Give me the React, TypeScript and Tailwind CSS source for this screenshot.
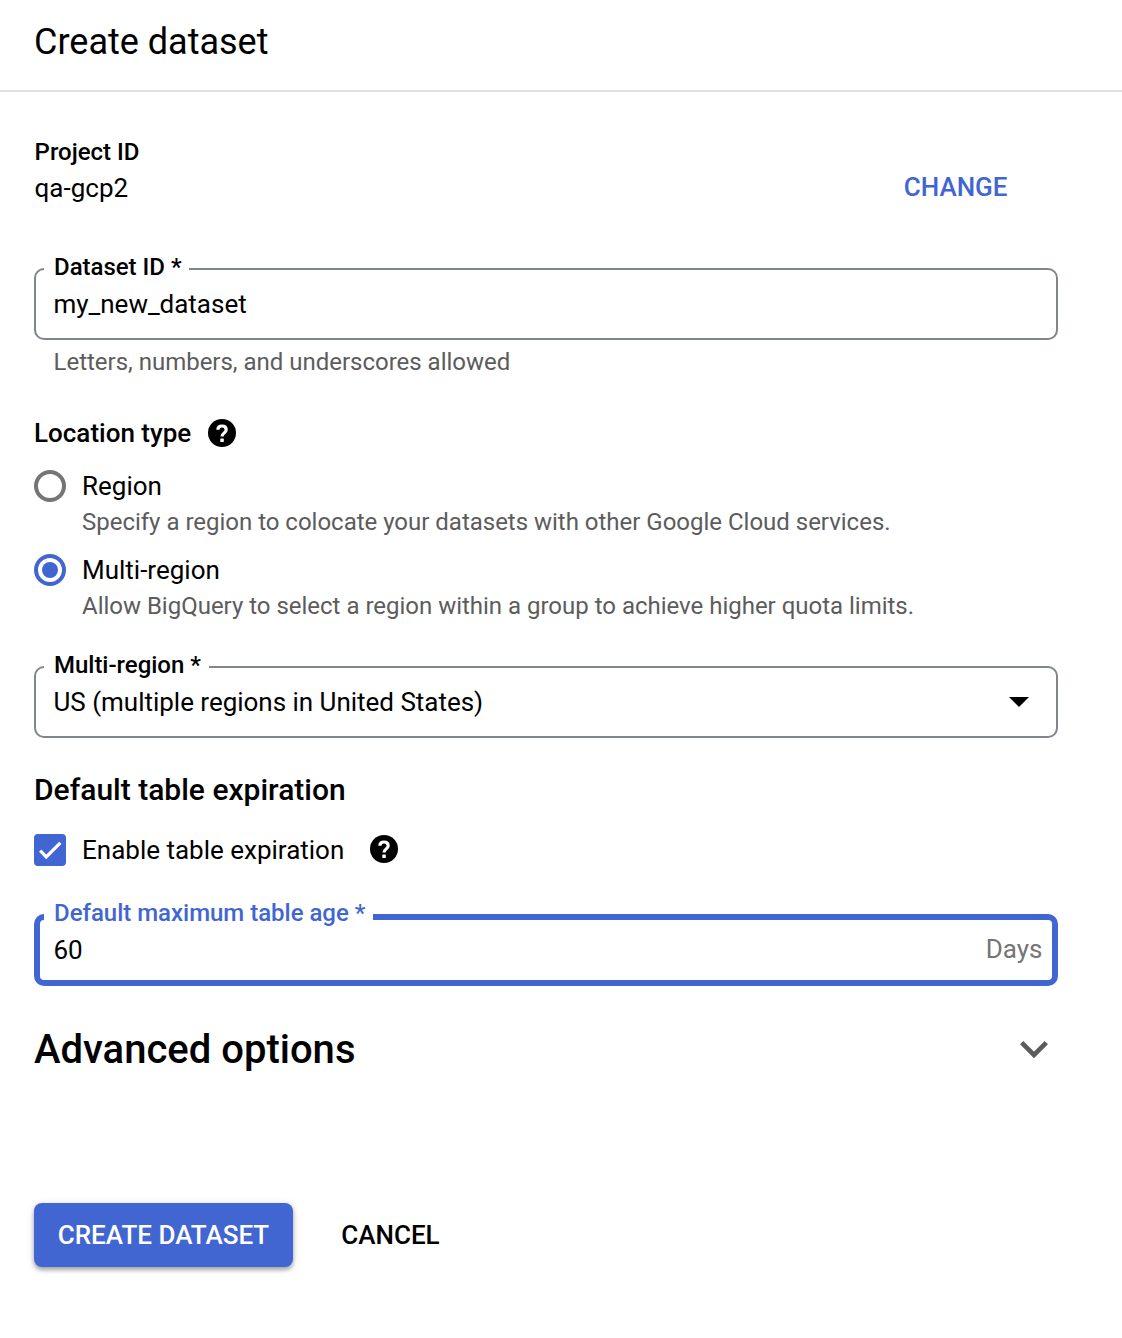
import React from 'react';

function HelpIcon() {
  return (
    <svg className="block size-[28px] shrink-0" viewBox="0 0 28 28">
      <circle cx="14" cy="14" r="14" fill="#000" />
      <path d="M9.900 10.700C9.900 8.200 11.500 7 14 7s4.200 1.400 4.200 3.700c0 3.200-4.100 3.200-4.100 6.700" fill="none" stroke="#fff" strokeWidth="3.200" />
      <rect x="12.300" y="19.500" width="3.500" height="3.500" rx="0.5" fill="#fff" />
    </svg>
  );
}

type FieldProps = { label: string; value: string; focused?: boolean; children?: React.ReactNode };

function Field({ label, value, focused = false, children }: FieldProps) {
  return (
    <fieldset className={focused
      ? 'm-0 h-[83px] w-[1024px] min-w-0 rounded-[10px] border-[6px] border-[#4166d2] pl-[4px] pr-[9.5px]'
      : 'm-0 h-[85px] w-[1024px] min-w-0 rounded-[10px] border-2 border-[#80868b] pl-[8px] pr-[27px]'}>
      <legend className={focused
        ? 'h-[28px] pl-[10px] pr-[8px] text-[24px] font-medium leading-[20px] tracking-[-0.02px] text-[#4166d2]'
        : 'h-[28px] pl-[10px] pr-[7.8px] text-[24px] font-medium leading-[24px] tracking-[-0.02px]'}>{label}</legend>
      <div className={focused
        ? 'flex h-[38px] items-center justify-between pl-[9.5px] text-[26px]'
        : 'flex h-[42px] items-center justify-between pl-[9.5px] text-[26px]'}>
        <span className="tracking-[-0.02px]">{value}</span>{children}
      </div>
    </fieldset>
  );
}

function RadioOption({ label, hint, checked = false }: { label: string; hint: string; checked?: boolean }) {
  return (
    <div className="flex gap-4">
      <span className={checked
        ? 'mt-[2px] flex size-8 items-center justify-center rounded-full border-4 border-[#4166d2]'
        : 'mt-[2px] flex size-8 rounded-full border-4 border-[#757575]'}>
        {checked && <span className="size-4 rounded-full bg-[#4166d2]" />}
      </span>
      <div>
        <p className="text-[26px] leading-[36px]">{label}</p>
        <p className="text-[24px] leading-[36px] tracking-[-0.012px] text-[#5c5c5c]">{hint}</p>
      </div>
    </div>
  );
}

export default function App() {
  return (
    <main className="h-[1338px] w-[1122px] bg-white font-[Roboto,sans-serif] text-black">
      <header className="flex h-[92px] items-center border-b-2 border-[#e0e0e0] px-[34px] pb-[6px] text-[36px]">
        <h1>Create dataset</h1>
      </header>
      <div className="pl-[34px] pt-[46px]">
        <div className="flex h-[117px] w-[973.5px] justify-between">
          <div className="pl-[0.6px]">
            <p className="text-[24px] font-medium leading-[28px]">Project ID</p>
            <p className="text-[26px] leading-[44px]">qa-gcp2</p>
          </div>
          <button className="mt-[34px] h-[30px] text-[26px] font-medium leading-[30px] text-[#4166d2]">CHANGE</button>
        </div>
        <Field label="Dataset ID *" value="my_new_dataset" />
        <p className="h-[76px] pl-[19.5px] pt-[8px] text-[24px] leading-[28px] tracking-[-0.012px] text-[#5c5c5c]">Letters, numbers, and underscores allowed</p>
        <div className="flex h-[34px] items-center gap-[17px]">
          <h2 className="text-[26px] font-medium">Location type</h2>
          <HelpIcon />
        </div>
        <div className="mt-[18px] flex flex-col gap-3">
          <RadioOption label="Region" hint="Specify a region to colocate your datasets with other Google Cloud services." />
          <RadioOption checked label="Multi-region" hint="Allow BigQuery to select a region within a group to achieve higher quota limits." />
        </div>
        <div className="mt-[29px]">
          <Field label="Multi-region *" value="US (multiple regions in United States)">
            <svg className="h-[10px] w-[20px]" viewBox="0 0 20 10"><path d="M0 0h20L10 10z" /></svg>
          </Field>
        </div>
        <h2 className="mt-8 text-[30px] font-medium leading-[40px]">Default table expiration</h2>
        <div className="mt-[22px] flex h-9 items-center">
          <span className="flex size-8 items-center justify-center rounded-[4px] bg-[#4166d2]">
            <svg className="size-8" viewBox="0 0 32 32"><path d="M6.200 16.700L12.200 22.900L26.300 8.900" fill="none" stroke="#fff" strokeWidth="3.200" /></svg>
          </span>
          <span className="ml-4 mr-[26px] text-[26px]">Enable table expiration</span>
          <div className="mb-[2px]"><HelpIcon /></div>
        </div>
        <div className="mt-[35px]">
          <Field focused label="Default maximum table age *" value="60"><span className="mb-[2px] text-[#757575]">Days</span></Field>
        </div>
        <div className="mt-[39px] flex h-12 w-[1014px] items-center justify-between">
          <h2 className="pt-[2px] text-[40px] font-medium leading-[48px]">Advanced options</h2>
          <svg className="h-[17px] w-[28px]" viewBox="0 0 28 17"><path d="M1.700 1.700L14 14l12.300-12.300" fill="none" stroke="#5c5c5c" strokeWidth="4.600" /></svg>
        </div>
        <div className="mt-[130px] flex gap-[48.3px] text-[26px] font-medium">
          <button className="h-[64px] w-[259px] rounded-[8px] bg-[#4166d2] text-white shadow-[0_3px_4px_rgba(0,0,0,0.3),0_1px_8px_rgba(0,0,0,0.12)]">CREATE DATASET</button>
          <button>CANCEL</button>
        </div>
      </div>
    </main>
  );
}
